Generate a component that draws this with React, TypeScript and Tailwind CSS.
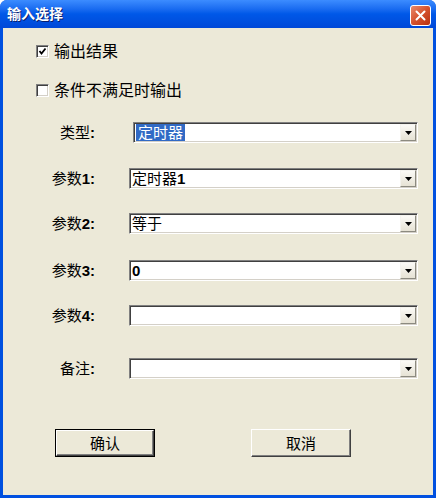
import type { ReactNode } from "react";

const font = "font-['Liberation_Sans','Noto_Sans_CJK_SC',sans-serif]";

function CheckBox({ checked, label }: { checked?: boolean; label: string }) {
  return (
    <div className="flex items-center h-[13px] ml-[33px]">
      <div className="w-[13px] h-[13px] bg-white border border-t-[#808080] border-l-[#808080] border-b-white border-r-white shadow-[inset_1px_1px_0_#404040,inset_-1px_-1px_0_#d4d0c8] flex items-center justify-center">
        {checked && (
          <svg width="9" height="9" viewBox="0 0 9 9">
            <polyline points="1.5,4 3.5,6.5 7.5,1.5" fill="none" stroke="#000" strokeWidth="1.8" />
          </svg>
        )}
      </div>
      <span className="ml-[5px] text-[16px] leading-none text-black">{label}</span>
    </div>
  );
}

function Combo({ children, width }: { children?: ReactNode; width: number }) {
  return (
    <div
      className="h-[21px] bg-white border border-t-[#808080] border-l-[#808080] border-b-white border-r-white shadow-[inset_1px_1px_0_#404040,inset_-1px_-1px_0_#d4d0c8] flex items-center"
      style={{ width }}
    >
      <div className="flex-1 pl-[2px] text-[15px] leading-none text-black truncate">{children}</div>
      <div className="w-[16px] h-[17px] mr-[1px] bg-linear-to-b from-[#fbfaf6] to-[#e6e2d4] border border-t-[#f4f3ee] border-l-[#f4f3ee] border-b-[#8c8a80] border-r-[#8c8a80] flex items-center justify-center">
        <svg width="7" height="4" viewBox="0 0 7 4">
          <polygon points="0,0 7,0 3.5,4" fill="#000" />
        </svg>
      </div>
    </div>
  );
}

function Row({ label, num, gap, width, children }: { label: string; num?: string; gap: number; width: number; children?: ReactNode }) {
  return (
    <div className="flex items-center">
      <div className="w-[92px] text-right text-[15px] leading-none text-black">
        {label}
        {num && <span className="font-bold">{num}</span>}
        <span className="font-bold">:</span>
      </div>
      <div style={{ marginLeft: gap }}>
        <Combo width={width}>{children}</Combo>
      </div>
    </div>
  );
}

function Button({ label, isDefault }: { label: string; isDefault?: boolean }) {
  return (
    <div className={`w-[100px] h-[28px] ${isDefault ? "border border-black" : ""}`}>
      <div className="w-full h-full bg-[#ECE9D8] border border-t-white border-l-white border-b-[#404040] border-r-[#404040] shadow-[inset_-1px_-1px_0_#808080] flex items-center justify-center text-[15px] leading-none text-black">
        {label}
      </div>
    </div>
  );
}

export default function App() {
  return (
    <div className={`w-[436px] h-[498px] flex flex-col bg-[#0050E0] rounded-t-[7px] overflow-hidden ${font}`}>
      <div className="h-[28px] flex items-center justify-between bg-linear-to-b from-[#3C8CFF] via-[#0058E8] to-[#0048D8] pl-[7px] pr-[5px]">
        <span className="text-white font-bold text-[14px] leading-none [text-shadow:1px_1px_0_#0a1e6e]">输入选择</span>
        <div className="w-[21px] h-[21px] mt-[3px] rounded-[3px] border border-white bg-linear-to-br from-[#E8896A] via-[#D5512C] to-[#B8300E] flex items-center justify-center">
          <svg width="11" height="11" viewBox="0 0 11 11">
            <path d="M1.5 1.5 L9.5 9.5 M9.5 1.5 L1.5 9.5" stroke="#fff" strokeWidth="2" strokeLinecap="round" />
          </svg>
        </div>
      </div>
      <div className="flex-1 mx-[3px] mb-[3px] bg-[#ECE9D8] flex flex-col pt-[17px]">
        <CheckBox checked label="输出结果" />
        <div className="mt-[26px]">
          <CheckBox label="条件不满足时输出" />
        </div>
        <div className="mt-[25px]">
          <Row label="类型" gap={38} width={285}>
            <span className="inline-block bg-[#316AC5] text-white px-[2px] leading-[17px]">定时器</span>
          </Row>
        </div>
        <div className="mt-[25px]">
          <Row label="参数" num="1" gap={34} width={289}>定时器<span className="font-bold">1</span></Row>
        </div>
        <div className="mt-[24px]">
          <Row label="参数" num="2" gap={34} width={289}>等于</Row>
        </div>
        <div className="mt-[26px]">
          <Row label="参数" num="3" gap={34} width={289}><span className="font-bold">0</span></Row>
        </div>
        <div className="mt-[24px]">
          <Row label="参数" num="4" gap={34} width={289} />
        </div>
        <div className="mt-[32px]">
          <Row label="备注" gap={34} width={289} />
        </div>
        <div className="mt-[50px] flex">
          <div className="ml-[52px]">
            <Button label="确认" isDefault />
          </div>
          <div className="ml-[96px]">
            <Button label="取消" />
          </div>
        </div>
      </div>
    </div>
  );
}
